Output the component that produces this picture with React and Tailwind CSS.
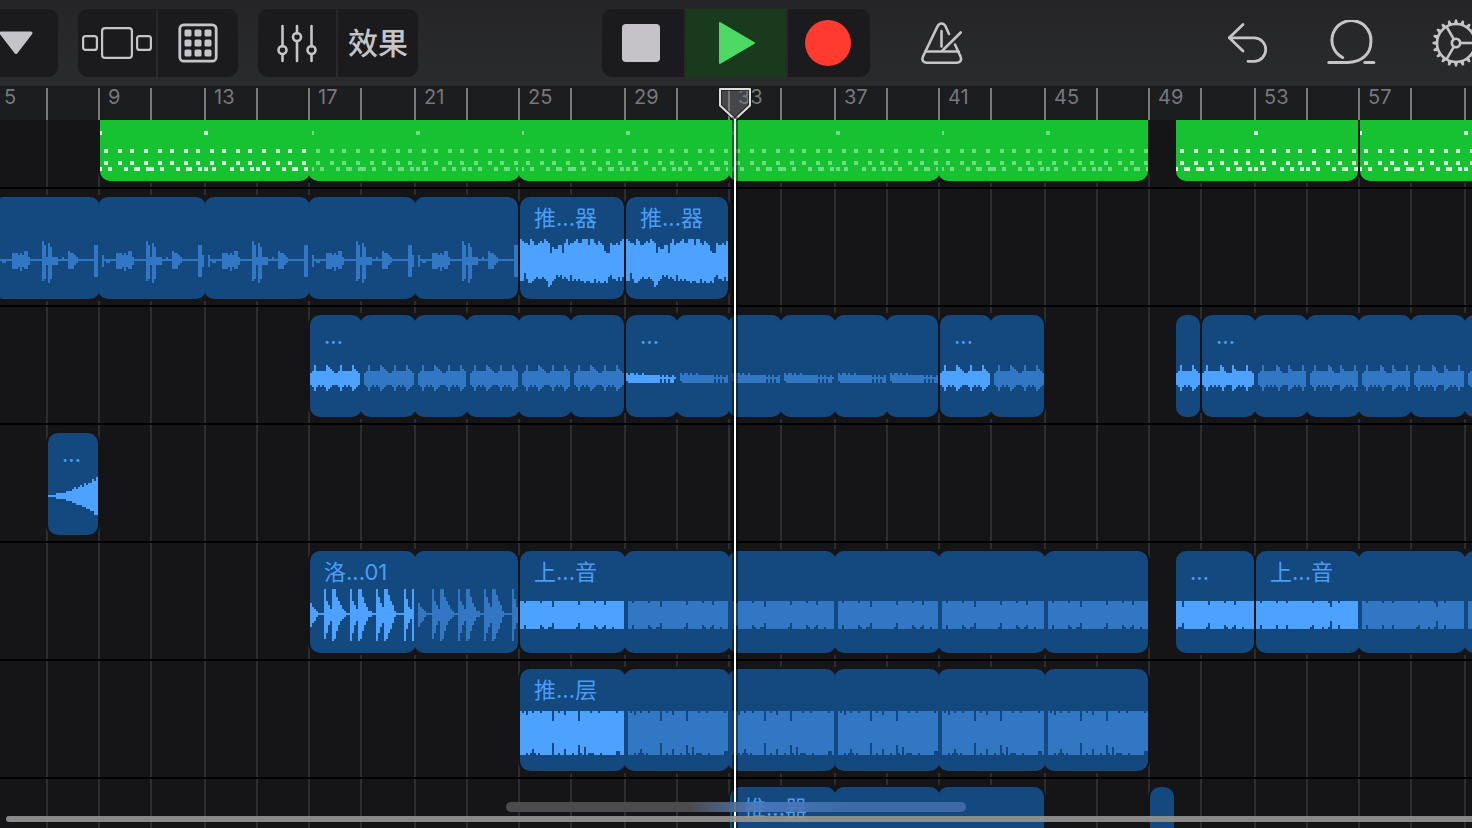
import React, { useEffect, useState } from "react";
import clsx from "clsx";

/* ---------- time axis ---------- */

const FIRST_BAR = 5;

// Pixel position of a bar, counted from the first visible bar line.
function barX(bar) {
  const step = (bar - FIRST_BAR) / 2;
  const group = Math.floor(step / 4);
  return group * 210 + (step - group * 4) * 52;
}

function useWindowWidth() {
  const [width, setWidth] = useState(window.innerWidth);
  useEffect(() => {
    const update = () => setWidth(window.innerWidth);
    window.addEventListener("resize", update);
    return () => window.removeEventListener("resize", update);
  }, []);
  return width;
}

// Every second bar that starts inside the window.
function visibleBars(width) {
  const bars = [];
  for (let bar = FIRST_BAR; barX(bar) < width + 6; bar += 2) bars.push(bar);
  return bars;
}

/* ---------- wave forms: one base-36 digit per two-pixel column ---------- */

const digits = (s) => s.split("").map((c) => parseInt(c, 36));
const wave = (up, down) => ({ up: digits(up), down: digits(down) });

function band(length, up, down, upNotches, downNotches) {
  const w = { up: Array(length).fill(up), down: Array(length).fill(down) };
  Object.entries(upNotches).forEach(([k, v]) => (w.up[k] = v));
  Object.entries(downNotches).forEach(([k, v]) => (w.down[k] = v));
  return w;
}

const WAVES = {
  kit: wave(
    "200000033323244100000097186111001004332100000000772",
    "3011000444353442000000a92b92220000044421000000008830"
  ),
  synth: wave(
    "a9887a977898a98365577" + "38a7889a88aaa7aa87987433877879a",
    "aa69bba98998" + "9adca97879" + "89a7a9a9aabaabb9babbab8799a8a8"
  ),
  beat: wave("2363333365432236333336432", "3464343465433346434346543"),
  halfBeat: wave("236333336432", "346434346543"),
  beatAlt: wave("23633333365322264333336332", "34643434346433365434346443"),
  hum: wave("2122121121111111101010010", "1222222222222222202020220"),
  riser: wave("0000111112223434546566879", "0000111112223344455667799"),
  pluck: wave(
    "5321000c642cc8642100c642cc8531100c853cc96410000c732c",
    "6431000c953dc8532100d953dc8531100d964dc97410000d742d"
  ),
  vocal: band(
    52, 6, 7,
    { 2: 5, 10: 5, 16: 3, 29: 4, 37: 5, 42: 4 },
    { 2: 5, 10: 5, 11: 6, 14: 6, 15: 6, 16: 4, 28: 6, 29: 4, 37: 5, 38: 6, 41: 6, 42: 5, 46: 6 }
  ),
  vocalAlt: band(
    52, 6, 7,
    { 2: 5, 10: 5, 15: 5, 28: 5, 36: 5, 37: 3, 41: 5 },
    { 2: 5, 10: 5, 15: 5, 27: 6, 28: 5, 33: 6, 36: 6, 37: 3, 41: 5 }
  ),
  layer: band(
    52, 10, 11,
    { 1: 9, 3: 8, 6: 9, 10: 9, 16: 5, 19: 9, 22: 8, 29: 5, 35: 9, 39: 9, 48: 9 },
    { 3: 10, 5: 10, 6: 8, 7: 10, 9: 10, 16: 5, 19: 10, 22: 8, 26: 10, 29: 6, 30: 10, 32: 7, 34: 10, 35: 10, 36: 10, 40: 10, 48: 9, 49: 9 }
  ),
};

function wavePath(w, x0, x1, offset) {
  let d = "";
  for (let x = x0, i = offset; x < x1 && i < w.up.length; x += 2, i++) {
    const up = (w.up[i] ?? 0) * 2;
    const down = (w.down[i] ?? 0) * 2;
    d += `M${x} ${62 - up}h2v${up + down + 2}h-2z`;
  }
  return d;
}

/* ---------- drum notes: [x, y, width] within an eight-bar pattern ---------- */

const HATS = [4, 18, 30, 44, 58, 70, 84, 96, 110, 122, 136, 148, 162, 176, 188, 202];
const KICKS = [
  [0, 2], [8, 4], [24, 4], [34, 6], [46, 8], [60, 4], [76, 4], [86, 6], [98, 4], [104, 4],
  [112, 4], [130, 4], [140, 4], [150, 4], [156, 4], [166, 4], [182, 4], [192, 6], [204, 4],
];
const NOTES = [
  [0, 11, 2],
  [104, 11, 4],
  ...HATS.flatMap((x) => [[x, 29, 4], [x, 41, 4]]),
  ...KICKS.map(([x, w]) => [x, 47, w]),
];

/* ---------- arrangement ---------- */

const TRACKS = [
  {
    kind: "midi",
    clips: [
      { cuts: [9, 17, 25, 33, 41, 49] },
      { cuts: [50, 57], offset: 26 },
      { cuts: [57, 65, 73] },
    ],
  },
  {
    clips: [
      { cuts: [5, 9, 13, 17, 21, 25], wave: "kit", continued: true },
      { cuts: [25, 29], wave: "synth", title: "推...器" },
      { cuts: [29, 33], wave: "synth", title: "推...器" },
    ],
  },
  {
    clips: [
      { cuts: [17, 19, 21, 23, 25, 27, 29], wave: "beat", title: "..." },
      { cuts: [29, 31, 33, 35, 37, 39, 41], wave: "hum", title: "..." },
      { cuts: [41, 43, 45], wave: "beat", title: "..." },
      { cuts: [50, 51], wave: "halfBeat" },
      { cuts: [51, 53, 55, 57, 59, 61, 63], wave: "beatAlt", title: "..." },
    ],
  },
  { clips: [{ cuts: [7, 9], wave: "riser", title: "..." }] },
  {
    clips: [
      { cuts: [17, 21, 25], wave: "pluck", title: "洛...01" },
      { cuts: [25, 29, 33, 37, 41, 45, 49], wave: "vocal", title: "上...音" },
      { cuts: [50, 53], wave: "vocal", offset: 13, title: "..." },
      { cuts: [53, 57, 61, 65], wave: "vocalAlt", title: "上...音" },
    ],
  },
  { clips: [{ cuts: [25, 29, 33, 37, 41, 45, 49], wave: "layer", title: "推...层" }] },
  { clips: [{ cuts: [33, 37, 41, 45], title: "推...器" }, { cuts: [49, 50] }] },
];

function Segment({ clip, index, midi }) {
  const first = index === 0 && !clip.continued;
  const last = index === clip.cuts.length - 2;
  const left = barX(clip.cuts[index]) + (first ? 2 : 0);
  const end = barX(clip.cuts[index + 1]);
  const width = end - left + (last ? 0 : 2);
  const inset = first ? 0 : 4;
  const offset = clip.offset ?? 0;

  return (
    <div
      className={clsx(
        "grid shrink-0 overflow-hidden",
        index > 0 && "-ml-0.5",
        midi ? "rounded-b-[10px] bg-[#17c232]" : "rounded-[10px] bg-[#14497f]"
      )}
      style={{ width }}
    >
      {midi ? (
        <svg
          className={clsx("[grid-area:1/1]", first ? "text-[#d5f6da]" : "text-[#70dc80]")}
          width={width}
          height="61"
          shapeRendering="crispEdges"
          fill="currentColor"
          aria-hidden="true"
        >
          {NOTES.map(([x, y, w], i) =>
            x + inset - offset >= -4 ? <rect key={i} x={x + inset - offset} y={y} width={w} height="4" /> : null
          )}
        </svg>
      ) : (
        clip.wave && (
          <svg
            className={clsx("[grid-area:1/1]", first ? "text-[#4da2ff]" : "text-[#3277c3]")}
            width={width}
            height="102"
            shapeRendering="crispEdges"
            fill="currentColor"
            aria-hidden="true"
          >
            <path d={wavePath(WAVES[clip.wave], inset, end - left, offset)} />
          </svg>
        )
      )}
      {index === 0 && clip.title && (
        <span className="pt-1.5 pl-3.5 text-[22px] leading-[30px] whitespace-nowrap text-[#4a9cf4] [grid-area:1/1]">
          {clip.title}
        </span>
      )}
    </div>
  );
}

function Clip({ clip, previousEnd, midi }) {
  const start = barX(clip.cuts[0]) + (clip.continued ? 0 : 2);
  return (
    <div
      className={clsx(
        "flex shrink-0 bg-[#151517] shadow-[0_0_0_2px_#151517]",
        midi ? "h-[61px] rounded-b-[10px]" : "h-[102px] rounded-[10px]"
      )}
      style={{ marginLeft: start - previousEnd }}
    >
      {clip.cuts.slice(1).map((cut, i) => (
        <Segment key={cut} clip={clip} index={i} midi={midi} />
      ))}
    </div>
  );
}

function Track({ track }) {
  const midi = track.kind === "midi";
  return (
    <li className={clsx("shrink-0 overflow-hidden border-b-2 border-black pb-1.5", !midi && "pt-2")}>
      <div className="-ml-1.5 flex">
        {track.clips.map((clip, i) => (
          <Clip
            key={i}
            clip={clip}
            midi={midi}
            previousEnd={i === 0 ? 0 : barX(track.clips[i - 1].cuts.at(-1))}
          />
        ))}
      </div>
    </li>
  );
}

/* ---------- toolbar ---------- */

function ToolGroup({ children, className }) {
  return <div className={clsx("flex h-[68px] gap-0.5 overflow-hidden rounded-[10px]", className)}>{children}</div>;
}

function ToolButton({ label, className, children }) {
  return (
    <button
      type="button"
      aria-label={label}
      className={clsx("flex h-full shrink-0 items-center justify-center text-[#c5c4c8]", className)}
    >
      {children}
    </button>
  );
}

function TracksIcon() {
  return (
    <svg width="70" height="32" viewBox="0 0 70 32" fill="none" stroke="currentColor" strokeWidth="2.2" aria-hidden="true">
      <rect x="1.1" y="9.1" width="13.8" height="13.8" rx="2.5" />
      <rect x="20.1" y="1.1" width="29.8" height="29.8" rx="3" />
      <rect x="55.1" y="9.1" width="13.8" height="13.8" rx="2.5" />
    </svg>
  );
}

function GridIcon() {
  return (
    <svg width="40" height="40" viewBox="0 0 40 40" fill="currentColor" aria-hidden="true">
      <rect x="1.8" y="1.8" width="36.4" height="36.4" rx="4" fill="none" stroke="currentColor" strokeWidth="2.8" />
      {[6.5, 16.5, 26.5].map((y) =>
        [6.5, 16.5, 26.5].map((x) => <rect key={`${x}-${y}`} x={x} y={y} width="7" height="7" rx="1.6" />)
      )}
    </svg>
  );
}

function FadersIcon() {
  return (
    <svg width="40" height="40" viewBox="0 0 40 40" fill="none" stroke="currentColor" strokeWidth="2.6" strokeLinecap="round" aria-hidden="true">
      <path d="M5.500 3v20.500M5.500 31.500V38M20 3v7.500M20 18.500V38M34.500 3v20.500M34.500 31.500V38" />
      <circle cx="5.5" cy="27" r="4" />
      <circle cx="20" cy="14" r="4" />
      <circle cx="34.5" cy="27" r="4" />
    </svg>
  );
}

function MetronomeIcon() {
  return (
    <svg width="44" height="44" viewBox="0 0 44 44" fill="none" stroke="currentColor" strokeWidth="2.6" strokeLinecap="round" strokeLinejoin="round" aria-hidden="true">
      <path d="M29 13 25.500 5.300C23.700 1.500 19.400 1.500 17.500 5.300L3 35.500C1.400 39 3 41.700 6.500 41.700h30.500c3.500 0 5.100-2.700 3.500-6.200L35 23.500" />
      <path d="M5.500 30.500h33" />
      <path d="M21.500 10v15.500" />
      <path d="M22.500 29.500 40.700 11.500" />
    </svg>
  );
}

function UndoIcon() {
  return (
    <svg width="44" height="44" viewBox="-0.5 0 44 44" fill="none" stroke="currentColor" strokeWidth="2.8" strokeLinecap="round" strokeLinejoin="round" aria-hidden="true">
      <path d="M16.500 3.500 2.800 16.800 16.500 30" />
      <path d="M2.800 16.800h25.700a11.800 11.800 0 0 1 0 23.500h-7" />
    </svg>
  );
}

function LoopIcon() {
  return (
    <svg width="50" height="46" viewBox="0.7 0 50 46" fill="none" stroke="currentColor" strokeWidth="3" strokeLinecap="round" strokeLinejoin="round" aria-hidden="true">
      <path d="M2.500 42.500H21C36 42.500 44.500 33 44.500 22.500A19.500 19.500 0 1 0 16.300 37.500" />
      <path d="M38.500 42.500h9" />
    </svg>
  );
}

function GearIcon() {
  return (
    <svg width="50" height="50" viewBox="-25 -25 50 50" fill="none" stroke="currentColor" strokeWidth="2.6" aria-hidden="true">
      <circle r="19" />
      <circle r="4.2" />
      {[0, 120, 240].map((a) => (
        <path key={a} d="M4.500 0H19" transform={`rotate(${a})`} />
      ))}
      {Array.from({ length: 20 }, (_, i) => (
        <path key={i} d="M19.500-2 23.500-1V1L19.500 2z" fill="currentColor" stroke="none" transform={`rotate(${i * 18})`} />
      ))}
    </svg>
  );
}

function Toolbar() {
  return (
    <header className="grid h-[86px] shrink-0 grid-cols-[1fr_auto_1fr] items-center overflow-hidden bg-linear-to-b from-[#252527] to-[#2a2b2d]">
      <div className="flex gap-5">
        <ToolGroup className="-ml-[26px]">
          <ToolButton label="视图" className="w-[84px] bg-[#1b1b1d]">
            <svg width="36" height="26" viewBox="0 0 36 26" fill="currentColor" stroke="currentColor" strokeWidth="3" strokeLinejoin="round" aria-hidden="true">
              <path d="M3 3h30L18 22.500z" />
            </svg>
          </ToolButton>
        </ToolGroup>
        <ToolGroup>
          <ToolButton label="轨道" className="w-[78px] bg-[#1b1b1d]"><TracksIcon /></ToolButton>
          <ToolButton label="实时循环" className="w-20 bg-[#1b1b1d]"><GridIcon /></ToolButton>
        </ToolGroup>
        <ToolGroup>
          <ToolButton label="混音" className="w-[78px] bg-[#1b1b1d]"><FadersIcon /></ToolButton>
          <ToolButton className="w-20 bg-[#1b1b1d]">
            <span className="text-[30px] font-medium">效果</span>
          </ToolButton>
        </ToolGroup>
      </div>

      <ToolGroup>
        <ToolButton label="停止" className="w-[82px] bg-[#1b1b1d] pr-1">
          <span className="size-[38px] rounded bg-[#c5c3c7]" />
        </ToolButton>
        <ToolButton label="播放" className="w-[100px] bg-[#193a1d]">
          <svg width="38" height="44" viewBox="-1 0 38 44" fill="#4cd964" stroke="#4cd964" strokeWidth="2" strokeLinejoin="round" aria-hidden="true">
            <path d="M2 2v40L36 22z" />
          </svg>
        </ToolButton>
        <ToolButton label="录音" className="w-[82px] bg-[#1b1b1d] pr-0.5">
          <span className="size-[46px] rounded-full bg-[#ff3b30]" />
        </ToolButton>
      </ToolGroup>

      <div className="flex h-[68px] justify-between">
        <ToolButton label="节拍器" className="ml-10 w-16"><MetronomeIcon /></ToolButton>
        <div className="-mr-9 flex">
          <ToolButton label="撤销" className="w-[104px]"><UndoIcon /></ToolButton>
          <ToolButton label="循环乐段" className="w-[104px]"><LoopIcon /></ToolButton>
          <ToolButton label="设置" className="w-[104px]"><GearIcon /></ToolButton>
        </div>
      </div>
    </header>
  );
}

function Ruler({ width }) {
  return (
    <div className="h-[34px] shrink-0 overflow-hidden bg-[#1c1d1f] pt-0.5">
      <div className="-ml-1.5 flex h-8">
        {visibleBars(width).map((bar) => (
          <div
            key={bar}
            className="shrink-0 border-l-2 border-[#7b7b7e] pl-2 text-[20px] leading-[18px] text-[#77787b]"
            style={{ width: barX(bar + 2) - barX(bar) }}
          >
            {bar % 4 === 1 && barX(bar) + 30 < width ? bar : null}
          </div>
        ))}
      </div>
    </div>
  );
}

function GridLines({ width }) {
  return (
    <div className="absolute inset-0 overflow-hidden" aria-hidden="true">
      <div className="-ml-1.5 flex h-full">
        {visibleBars(width).map((bar) => (
          <div
            key={bar}
            className="shrink-0 border-l-2 border-[#2d2d2f]"
            style={{ width: barX(bar + 2) - barX(bar) }}
          />
        ))}
      </div>
    </div>
  );
}

function Playhead() {
  return (
    <div className="pointer-events-none absolute top-0.5 bottom-0 left-[718px] flex w-[34px] flex-col items-center">
      <svg className="shrink-0" width="34" height="33" viewBox="0 0 34 33" aria-hidden="true">
        <path
          d="M2 1h30v16.500L17 31.500 2 17.500z"
          fill="#7c7c80"
          fillOpacity="0.45"
          stroke="#111"
          strokeOpacity="0.6"
          strokeWidth="4"
        />
        <path d="M2 1h30v16.500L17 31.500 2 17.500z" fill="none" stroke="#dededf" strokeWidth="2" strokeLinejoin="round" />
      </svg>
      <div className="-mt-0.5 w-0.5 flex-1 bg-white shadow-[0_0_0_2px_rgba(0,0,0,0.45)]" />
    </div>
  );
}

export default function App() {
  const width = useWindowWidth();
  return (
    <div className="flex h-screen flex-col overflow-hidden bg-[#151517] font-[Inter,'Noto_Sans_CJK_SC',sans-serif] select-none">
      <Toolbar />
      <main className="relative flex min-h-0 flex-1 flex-col">
        <Ruler width={width} />
        <div className="relative min-h-0 flex-1 overflow-hidden">
          <GridLines width={width} />
          <ul className="relative flex flex-col">
            {TRACKS.map((track, i) => (
              <Track key={i} track={track} />
            ))}
          </ul>
        </div>
        <Playhead />
        <div className="absolute bottom-4 left-[506px] h-2.5 w-[460px] rounded-full bg-linear-to-r from-[#4b4b4c] from-40% via-[#4a7cbf]/90 via-54% to-[#436dab]/90 to-75%" />
        <div className="absolute right-0 bottom-1.5 left-1.5 h-1.5 rounded-l-full bg-[#969696]/90" />
      </main>
    </div>
  );
}
